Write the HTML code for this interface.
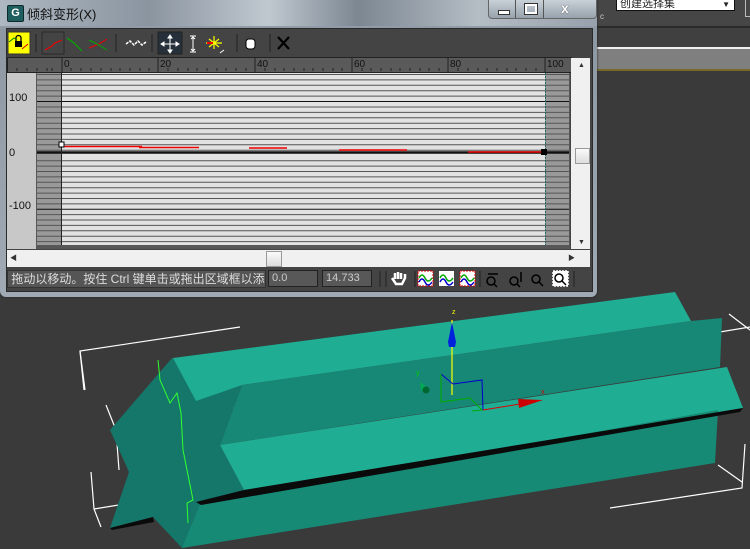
<!DOCTYPE html>
<html><head><meta charset="utf-8"><style>
body{margin:0;width:750px;height:549px;overflow:hidden;background:#3a3a3a;font-family:"Liberation Sans","Noto Sans CJK SC",sans-serif;position:relative}
.a{position:absolute}
</style></head><body>
<!-- right top area -->
<div class="a" style="left:597px;top:0;width:153px;height:26px;background:#464646"></div>
<div class="a" style="left:597px;top:26px;width:153px;height:2px;background:#2a2a2a"></div>
<div class="a" style="left:597px;top:28px;width:153px;height:19px;background:#404040"></div>
<div class="a" style="left:597px;top:47px;width:153px;height:2px;background:#f0f0f0"></div>
<div class="a" style="left:597px;top:49px;width:153px;height:20px;background:#7f7f7f"></div>
<div class="a" style="left:597px;top:69px;width:153px;height:2px;background:#7a6a2a"></div>
<div class="a" style="left:616px;top:0;width:117px;height:10px;background:#fff;border:1px solid #111;border-top:none;font-size:11px;line-height:9px;color:#222;overflow:hidden">&nbsp;创建选择集<span style="position:absolute;right:4px;top:0;font-size:8px">▼</span></div>
<div class="a" style="left:745px;top:0;width:5px;height:16px;border:1px solid #bbb;border-top:none"></div>
<div class="a" style="left:600px;top:12px;font-size:8px;color:#ccc">c</div>

<!-- viewport scene -->
<svg class="a" style="left:0;top:0" width="750" height="549">
<g fill="none" stroke="#fff" stroke-width="1.2">
<polyline points="240,327 80,351 84,390"/>
<polyline points="80,351 85,390"/>
<polyline points="106,405 116,430 119,470"/>
<polyline points="116,430 297,396"/>
<polyline points="91,472 94,509 101,527"/>
<polyline points="94509"/>
<polyline points="94,509 150,500"/>
<polyline points="617,349 750,327"/>
<polyline points="729,314 750,330"/>
<polyline points="610,508 742,488 745,444"/>
<polyline points="718,465 742,482"/>
</g>
<polygon points="110,430 172,358 242,385 220,445 244,490 182,548 153,517 110,528 129,472" fill="#15766a"/>
<polygon points="173,358 675,292 691,321 242,385 196,401" fill="#1fae94"/>
<polygon points="242,385 691,321 722,318 720,367 220,445" fill="#178875"/>
<polygon points="220,445 727,367 743,408 244,490" fill="#1fae94"/>
<polygon points="201,502 718,410 715,463 182,548" fill="#178a75"/>
<polygon points="244,490 743,408 740,412 201,505 196,502" fill="#0a0a0a"/>
<polygon points="110,528 153,517 154,522 112,530" fill="#0a0a0a"/>
<polyline points="158,360 160,380 170,403 177,393 181,413 183,450 193,500 187,503 188,523" fill="none" stroke="#30ff30" stroke-width="1"/>
<!-- gizmo -->
<line x1="452" y1="320" x2="452" y2="395" stroke="#ffff00" stroke-width="1.2"/>
<polygon points="452,322 448,342 449,347 455,347 456,342" fill="#0022dd"/>
<text x="452" y="314" font-size="7" fill="#ff0" font-family="Liberation Sans">z</text>
<polyline points="441,374 453,384 482,380 483,410" fill="none" stroke="#00c" stroke-width="1"/>
<polyline points="441,374 441,402 470,398 482,410 472,411" fill="none" stroke="#0a0" stroke-width="1"/>
<polyline points="483,410 520,404" fill="none" stroke="#d00" stroke-width="1"/>
<polygon points="518,399 543,400 519,408" fill="#cc0000"/>
<text x="541" y="394" font-size="7" fill="#d00" font-family="Liberation Sans">x</text>
<polygon points="420,382 428,388 425,393 421,390" fill="#0a5"/>
<circle cx="426" cy="390" r="3.5" fill="#063"/>
<text x="416" y="375" font-size="7" fill="#0c0" font-family="Liberation Sans">y</text>
</svg>

<!-- dialog -->
<div class="a" style="left:0;top:0;width:597px;height:297px;background:linear-gradient(180deg,#b8c2cc,#8d98a3 10%,#a0aab4 100%);border-radius:0 0 6px 6px;box-shadow:0 0 2px #222"></div>
<div class="a" style="left:0;top:0;width:597px;height:26px;background:linear-gradient(90deg,#aeb8c2,#8b95a0 25%,#c0c8d0 45%,#7c8792 60%,#b4bcc4 80%,#98a2ac)"></div>
<div class="a" style="left:7px;top:5px;width:15px;height:15px;background:#1e5e5e;border:1px solid #0c2c2c;border-radius:2px;color:#fff;font-size:11px;line-height:15px;text-align:center;font-weight:bold">G</div>
<div class="a" style="left:27px;top:4px;font-size:13px;color:#111">倾斜变形(X)</div>
<div class="a" style="left:488px;top:0;width:107px;height:18px;border:1px solid #666;border-top:none;border-radius:0 0 4px 4px;background:linear-gradient(#c9d1d8,#97a2ac)"></div>
<div class="a" style="left:515px;top:0;width:1px;height:18px;background:#555"></div>
<div class="a" style="left:543px;top:0;width:1px;height:18px;background:#555"></div>
<div class="a" style="left:498px;top:10px;width:10px;height:3px;background:#fff;border:1px solid #333"></div>
<div class="a" style="left:525px;top:4px;width:8px;height:6px;border:2px solid #fff;outline:1px solid #333"></div>
<div class="a" style="left:561px;top:0px;font-size:14px;font-weight:bold;color:#fff;text-shadow:0 0 1px #000">x</div>

<div class="a" style="left:6px;top:28px;width:585px;height:262px;background:#444;border:1px solid #2a2a2a"></div>
<!-- toolbar -->
<svg class="a" style="left:6px;top:30px" width="585" height="26">
<rect x="2" y="2" width="22" height="22" fill="#ffff00" stroke="#333"/>
<rect x="9" y="11" width="7" height="6" fill="#000"/><path d="M10,11 v-3 a2.5,2.5 0 0 1 5,0 v3" fill="none" stroke="#000" stroke-width="1.3"/>
<path d="M3,12 l5,-4 l3,2" stroke="#080" fill="none"/><path d="M16,19 l6,-5" stroke="#d00" fill="none"/>
<line x1="30" y1="4" x2="30" y2="22" stroke="#222"/>
<rect x="36" y="2" width="22" height="22" fill="none" stroke="#2a2a2a"/>
<path d="M39,20 l7,-4 l3,-3 l7,-3" stroke="#e00" fill="none" stroke-width="1.2"/>
<path d="M61,8 l7,5 l8,8" stroke="#0a0" fill="none" stroke-width="1.2"/>
<path d="M83,18 l10,-4 l8,-5" stroke="#e00" fill="none"/><path d="M83,10 l10,5 l8,5" stroke="#0a0" fill="none"/>
<line x1="110" y1="4" x2="110" y2="22" stroke="#222"/>
<path d="M120,14 l4,-3 l4,4 l4,-4 l4,4 l4,-3" stroke="#fff" fill="none" stroke-width="1.5" stroke-dasharray="3,1"/>
<line x1="146" y1="4" x2="146" y2="22" stroke="#222"/>
<rect x="152" y="2" width="24" height="22" fill="#25303a" stroke="#222"/>
<path d="M164,6 v16 M156,14 h16 M164,5 l-2,3 h4z M164,23 l-2,-3 h4z M155,14 l3,-2 v4z M173,14 l-3,-2 v4z" stroke="#fff" fill="#fff"/>
<path d="M184,6 h6 M187,6 v16 M184,22 h6 M185,9 l2,-2 l2,2 M185,19 l2,2 l2,-2" stroke="#fff" fill="none"/>
<path d="M200,13 h16 M208,6 v13 M203,9 l10,8 M213,9 l-10,8" stroke="#ff0" stroke-width="1.2"/><path d="M201,13 h6" stroke="#e00" stroke-width="2"/>
<path d="M214,23 l4,-3" stroke="#fff"/>
<line x1="231" y1="4" x2="231" y2="22" stroke="#222"/>
<rect x="240" y="9" width="9" height="10" rx="3" fill="#fff" stroke="#000"/>
<line x1="264" y1="4" x2="264" y2="22" stroke="#222"/>
<path d="M272,7 l11,12 M283,7 l-11,12" stroke="#000" stroke-width="2.2"/>
</svg>
<!-- ruler -->
<div class="a" style="left:7px;top:57px;width:563px;height:14px;background:#5a5a5a;border:1px solid #222"></div>
<svg class="a" style="left:7px;top:57px" width="564" height="16" font-family="Liberation Sans" font-size="10" fill="#111">
<g stroke="#222">
<path d="M10,11v3M20,11v3M30,11v3M40,11v3M45,11v3M64,11v3M74,11v3M84,11v3M94,11v3M104,11v3M113,11v3M123,11v3M133,11v3M142,11v3M161,11v3M171,11v3M181,11v3M190,11v3M200,11v3M210,11v3M219,11v3M229,11v3M239,11v3M258,11v3M268,11v3M277,11v3M287,11v3M297,11v3M306,11v3M316,11v3M326,11v3M335,11v3M355,11v3M364,11v3M374,11v3M384,11v3M393,11v3M403,11v3M413,11v3M422,11v3M432,11v3M451,11v3M461,11v3M471,11v3M480,11v3M490,11v3M500,11v3M509,11v3M519,11v3M529,11v3"/>
<path d="M55,1v14M151,1v14M248,1v14M345,1v14M441,1v14M538,1v14"/>
</g>
<text x="57" y="10">0</text><text x="153" y="10">20</text><text x="250" y="10">40</text><text x="347" y="10">60</text><text x="443" y="10">80</text><text x="540" y="10">100</text>
</svg>
<!-- graph area -->
<div class="a" style="left:7px;top:73px;width:29px;height:176px;background:#c8c8c8"></div>
<div class="a" style="left:36px;top:73px;width:534px;height:176px;background:#575757"></div>
<svg class="a" style="left:37px;top:73px" width="532" height="172">
<rect x="0" y="0" width="24" height="172" fill="#999"/>
<rect x="24" y="0" width="484" height="172" fill="#e2e2e2"/>
<rect x="508" y="0" width="24" height="172" fill="#999"/>
<g stroke="#555" stroke-width="1">
<path d="M0,1.5h532M0,6.9h532M0,12.3h532M0,17.7h532M0,23.1h532M0,34h532M0,39.4h532M0,44.8h532M0,50.2h532M0,55.6h532M0,61h532M0,66.4h532M0,71.8h532M0,77.2h532M0,87.7h532M0,93.1h532M0,98.5h532M0,103.9h532M0,109.3h532M0,114.7h532M0,120.1h532M0,125.5h532M0,130.9h532M0,141.6h532M0,147h532M0,152.4h532M0,157.8h532M0,163.2h532M0,168.6h532"/>
</g>
<g stroke="#111"><path d="M0,28.5h532M0,136.3h532"/></g>
<path d="M0,79.5h532" stroke="#111" stroke-width="2.5"/>
<line x1="24.5" y1="0" x2="24.5" y2="172" stroke="#222"/>
<line x1="508.5" y1="0" x2="508.5" y2="172" stroke="#266" stroke-dasharray="2,1"/>
<g stroke="#e00" stroke-width="1.5" fill="none">
<path d="M27,73.5h78M102,74.5h60M212,75h38M302,77h68M431,79h77"/>
</g>
<rect x="22" y="69" width="5" height="5" fill="#fff" stroke="#000"/>
<rect x="504" y="76" width="6" height="6" fill="#000"/>
</svg>
<div class="a" style="left:9px;top:92px;font-size:11px;color:#111">100</div>
<div class="a" style="left:9px;top:147px;font-size:11px;color:#111">0</div>
<div class="a" style="left:9px;top:200px;font-size:11px;color:#111">-100</div>
<!-- v scrollbar -->
<div class="a" style="left:571px;top:58px;width:19px;height:191px;background:#f0f0f0"></div>
<div class="a" style="left:578px;top:62px;font-size:7px;color:#333">▲</div>
<div class="a" style="left:578px;top:239px;font-size:7px;color:#333">▼</div>
<div class="a" style="left:575px;top:148px;width:13px;height:14px;background:linear-gradient(#fafafa,#ddd);border:1px solid #999"></div>
<!-- h scrollbar -->
<div class="a" style="left:7px;top:250px;width:583px;height:17px;background:#f0f0f0"></div>
<div class="a" style="left:10px;top:253px;font-size:7px;color:#333">◀</div>
<div class="a" style="left:568px;top:253px;font-size:7px;color:#333">▶</div>
<div class="a" style="left:266px;top:251px;width:14px;height:14px;background:linear-gradient(#fafafa,#ddd);border:1px solid #999"></div>
<!-- status -->
<div class="a" style="left:7px;top:270px;width:257px;height:16px;background:#555;border:1px solid #333;color:#ddd;font-size:12px;line-height:16px;overflow:hidden;white-space:nowrap">&nbsp;拖动以移动。按住 Ctrl 键单击或拖出区域框以添</div>
<div class="a" style="left:268px;top:270px;width:48px;height:15px;background:#585858;border:1px solid #222;color:#ccc;font-size:11px;line-height:15px">&nbsp;0.0</div>
<div class="a" style="left:322px;top:270px;width:48px;height:15px;background:#585858;border:1px solid #222;color:#ccc;font-size:11px;line-height:15px">&nbsp;14.733</div>
<svg class="a" style="left:378px;top:268px" width="200" height="22">
<path d="M2,3v16M8,3v16" stroke="#222"/>
<path d="M14,10 l4,6 h6 l3,-6 v-4 M17,11v-6M20,11v-7M23,11v-6" stroke="#fff" stroke-width="2.5" fill="none"/>
<path d="M37,3v16" stroke="#222"/>
<g><rect x="40" y="3" width="15" height="15" fill="#fff" stroke="#d00" stroke-dasharray="2,1"/><path d="M41,10 q3,-6 6,0 t7,0" stroke="#0a0" fill="none" stroke-width="1.5"/><path d="M41,14 q3,-6 6,0 t7,0" stroke="#00c" fill="none" stroke-width="1.5"/></g>
<g><rect x="61" y="3" width="15" height="15" fill="#fff"/><path d="M62,10 q3,-6 6,0 t7,0" stroke="#0a0" fill="none" stroke-width="1.5"/><path d="M62,14 q3,-6 6,0 t7,0" stroke="#00c" fill="none" stroke-width="1.5"/></g>
<g><rect x="82" y="3" width="15" height="15" fill="#fff" stroke="#d00" stroke-dasharray="2,1"/><path d="M83,10 q3,-6 6,0 t7,0" stroke="#0a0" fill="none" stroke-width="1.5"/><path d="M83,14 q3,-6 6,0 t7,0" stroke="#00c" fill="none" stroke-width="1.5"/></g>
<path d="M102,3v16" stroke="#222"/>
<g fill="none" stroke="#000" stroke-width="1.5"><circle cx="113" cy="13" r="4"/><path d="M116,16l3,3M110,6h10"/>
<circle cx="136" cy="13" r="4"/><path d="M139,16l3,3M143,4v10"/>
<circle cx="158" cy="11" r="4"/><path d="M161,14l4,4"/>
<rect x="175" y="3" width="15" height="15" stroke="#fff" fill="#fff" stroke-dasharray="2,1"/><circle cx="181" cy="10" r="4"/><path d="M184,13l4,4"/></g>
<path d="M196,3v16" stroke="#222"/>
</svg>
</body></html>
